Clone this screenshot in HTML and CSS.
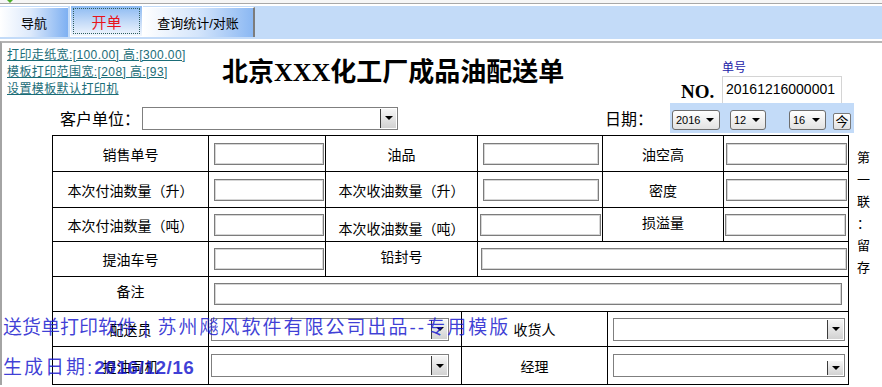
FILE: index.html
```html
<!doctype html>
<html>
    <head>
        <meta charset="utf-8">
        <link rel="stylesheet" href="styles.css">
    </head>
    <body>
        <div class="strip"><span class="grip"></span></div>
        <div class="tabbar">
            <div class="tab tab-first">导航</div>
            <div class="tab tab-on"><span>开单</span></div>
            <div class="tab tab-last">查询统计/对账</div>
        </div>
        <div class="content">
            <div class="head">
                <div class="links">
                    <a href="#">打印走纸宽:[100.00] 高:[300.00]</a>
                    <a href="#">模板打印范围宽:[208] 高:[93]</a>
                    <a href="#">设置模板默认打印机</a>
                </div>
                <h1 class="title">北京XXX化工厂成品油配送单</h1>
                <div class="no">
                    <div class="no-label">单号</div>
                    <div class="no-row">
                        <b>NO.</b>
                        <span class="no-box">20161216000001</span>
                    </div>
                </div>
            </div>

            <div class="subhead">
                <span class="cust">客户单位：</span>
                <div class="combo cb-cust"><i></i></div>
                <span class="date-label">日期：</span>
                <div class="datebar">
                    <span class="pick p-year">2016</span>
                    <span class="pick p-month">12</span>
                    <span class="pick p-day">16</span>
                    <span class="today">今</span>
                </div>
            </div>

            <div class="sheet">
                <div class="grid">
                    <!-- row 1 -->
                    <div class="row r1">
                        <div class="c lab">销售单号</div>
                        <div class="c in1"><span class="field f-a"></span></div>
                        <div class="c lab2">油品</div>
                        <div class="c in2"><span class="field f-b"></span></div>
                        <div class="c lab3">油空高</div>
                        <div class="c in3"><span class="field f-c"></span></div>
                    </div>
                    <!-- row 2 -->
                    <div class="row r2">
                        <div class="c lab">本次付油数量（升）</div>
                        <div class="c in1"><span class="field f-a"></span></div>
                        <div class="c lab2">本次收油数量（升）</div>
                        <div class="c in2"><span class="field f-b"></span></div>
                        <div class="c lab3">密度</div>
                        <div class="c in3"><span class="field f-c"></span></div>
                    </div>
                    <!-- row 3 -->
                    <div class="row r3">
                        <div class="c lab">本次付油数量（吨）</div>
                        <div class="c in1"><span class="field f-a"></span></div>
                        <div class="c lab2 low">本次收油数量（吨）</div>
                        <div class="c in2"><span class="field f-b"></span></div>
                        <div class="c lab3 high">损溢量</div>
                        <div class="c in3"><span class="field f-c"></span></div>
                    </div>
                    <!-- row 4 -->
                    <div class="row r4">
                        <div class="c lab">提油车号</div>
                        <div class="c in1"><span class="field f-a"></span></div>
                        <div class="c lab2 high">铅封号</div>
                        <div class="c wide4"><span class="field f-long"></span></div>
                    </div>
                    <!-- row 5 -->
                    <div class="row r5">
                        <div class="c lab high">备注</div>
                        <div class="c wide5"><span class="field f-note"></span></div>
                    </div>
                    <!-- row 6 -->
                    <div class="row r6">
                        <div class="c lab">配送员</div>
                        <div class="c sel1"><div class="combo cb-a"><i></i></div></div>
                        <div class="c lab4">收货人</div>
                        <div class="c sel2"><div class="combo cb-b"><i></i></div></div>
                    </div>
                    <!-- row 7 -->
                    <div class="row r7">
                        <div class="c lab">提油司机</div>
                        <div class="c sel1"><div class="combo cb-a"><i></i></div></div>
                        <div class="c lab4">经理</div>
                        <div class="c sel2"><div class="combo cb-b low"><i></i></div></div>
                    </div>
                </div>
                <div class="side">
                    <span>第</span><span>一</span><span>联</span><span>：</span><span>留</span><span>存</span>
                </div>
            </div>

            <div class="mark">
                <div><span class="m-a">送货单打印软件</span> | 苏州飚风软件有限公司出品--专用模版</div>
                <div>生成日期:<b>2016/12/16</b></div>
            </div>
        </div>
    </body>
</html>
```

FILE: styles.css
```css
* {
    margin: 0;
    padding: 0;
    box-sizing: border-box;
}
body {
    width: 882px;
    height: 387px;
    overflow: hidden;
    background: #fff;
    font-family: "Liberation Sans", "Noto Sans CJK SC", sans-serif;
    color: #000;
}

/* top strip and tabs */
.strip {
    height: 4px;
    border-bottom: 1px solid #a8a8a8;
    background: #f6f6f6;
    padding-left: 7px;
}
.grip {
    display: block;
    width: 0;
    height: 0;
    border-left: 3px solid transparent;
    border-right: 3px solid transparent;
    border-top: 3px solid #4caf2a;
}
.tabbar {
    margin-top: 2px;
    height: 33px;
    background: #c3dbf8;
    display: flex;
    align-items: flex-end;
    padding-bottom: 2px;
}
.tab {
    height: 30px;
    display: flex;
    align-items: center;
    justify-content: center;
    font-size: 13px;
    border-top: 1px solid #fff;
}
.tab-first {
    width: 68px;
    background: linear-gradient(to right, #fff 0%, #dce9fb 45%, #7eb0f2 100%);
}
.tab-on {
    width: 73px;
    height: 32px;
    margin-left: 2px;
    padding: 2px;
    border: 1px solid #fff;
    background: linear-gradient(to bottom, #8cbaf2 0%, #c6dcf8 55%, #f2f7fe 100%);
}
.tab-on span {
    flex: 1;
    align-self: stretch;
    display: flex;
    align-items: center;
    justify-content: center;
    border: 1px dotted #2f5f5f;
    color: #e8141c;
    font-size: 15px;
}
.tab-last {
    width: 112px;
    border-right: 2px solid #7c7c7c;
    background: linear-gradient(to right, #fff 0%, #d4e5fb 50%, #8bb8f3 100%);
}

/* page body */
.content {
    position: relative;
    margin-top: 2px;
    height: 344px;
    border-top: 2px solid #b4b4b4;
    border-left: 2px solid #a4a4a4;
}
.head {
    display: flex;
    height: 60px;
}
.links {
    width: 215px;
    padding: 4px 0 0 5px;
    display: flex;
    flex-direction: column;
}
.links a {
    font-size: 12px;
    line-height: 17px;
    letter-spacing: 0.4px;
    color: #1b6d78;
    white-space: nowrap;
}
.title {
    align-self: center;
    margin-left: 5px;
    font-family: "Liberation Serif", "Noto Sans CJK SC", serif;
    font-size: 26px;
    font-weight: bold;
    line-height: 30px;
    white-space: nowrap;
}
.no {
    margin-left: auto;
    margin-right: 40px;
    align-self: flex-end;
    display: flex;
    flex-direction: column;
}
.no-label {
    padding-left: 41px;
    font-size: 12px;
    line-height: 16px;
    color: #1a1aa8;
}
.no-row {
    display: flex;
    align-items: flex-end;
}
.no-row b {
    width: 41px;
    font-family: "Liberation Serif", serif;
    font-size: 19px;
    line-height: 22px;
}
.no-box {
    width: 120px;
    height: 27px;
    padding: 4px 0 0 3px;
    border: 1px solid #d4d4d4;
    border-bottom: none;
    font-size: 14px;
    line-height: 16px;
}

.subhead {
    display: flex;
    align-items: center;
    height: 30px;
    padding-left: 58px;
}
.cust, .date-label {
    font-size: 16px;
}
.cust {
    width: 82px;
}
.cb-cust {
    width: 256px;
}
.date-label {
    margin-left: 207px;
    width: 65px;
}
.datebar {
    align-self: stretch;
    width: 184px;
    background: #c3dbf8;
    display: flex;
    align-items: flex-end;
    padding: 0 0 3px 2px;
}
.pick {
    height: 20px;
    display: flex;
    align-items: center;
    justify-content: space-between;
    padding: 0 5px 0 3px;
    border: 1px solid #6e6e6e;
    border-radius: 3px;
    background: linear-gradient(#fff, #e2e2e2);
    font-size: 11px;
}
.pick::after {
    content: "";
    border-left: 4px solid transparent;
    border-right: 4px solid transparent;
    border-top: 4px solid #000;
}
.p-year { width: 48px; }
.p-month { width: 36px; margin-left: 10px; }
.p-day { width: 37px; margin-left: 23px; }
.today {
    width: 18px;
    height: 17px;
    margin-left: 7px;
    border: 1px solid #7a7a7a;
    border-radius: 2px;
    background: linear-gradient(#fff, #e0e0e0);
    font-size: 13px;
    line-height: 15px;
    text-align: center;
}

/* combo boxes */
.combo {
    height: 23px;
    border: 1px solid #7f7f7f;
    background: #fff;
    display: flex;
    justify-content: flex-end;
    padding: 1px;
}
.combo i {
    width: 16px;
    border-left: 1px solid #3c3c3c;
    background: linear-gradient(#f6f6f6, #d2d2d2);
    display: flex;
    align-items: center;
    justify-content: center;
}
.combo i::after {
    content: "";
    border-left: 4px solid transparent;
    border-right: 4px solid transparent;
    border-top: 4px solid #000;
}

/* the sheet */
.sheet {
    display: flex;
    margin-top: 2px;
}
.grid {
    margin-left: 50px;
    border-left: 1px solid #000;
    border-top: 1px solid #000;
}
.row {
    display: flex;
    border-bottom: 1px solid #000;
}
.r1, .r2 { height: 36px; }
.r3 { height: 34px; }
.r4, .r5, .r6 { height: 35px; }
.r7 { height: 38px; }
.c {
    border-right: 1px solid #000;
    display: flex;
    align-items: center;
    font-size: 14px;
    white-space: nowrap;
}
.lab, .lab2, .lab3, .lab4 {
    justify-content: center;
}
.low { padding-top: 6px; }
.high { padding-bottom: 6px; }
.lab { width: 156px; }
.in1 { width: 117px; }
.lab2 { width: 152px; }
.in2 { width: 125px; }
.lab3 { width: 121px; }
.in3 { width: 125px; }
.wide4 { width: 371px; }
.wide5 { width: 640px; }
.sel1 { width: 253px; }
.lab4 { width: 146px; }
.sel2 { width: 241px; }

.field {
    display: block;
    height: 22px;
    border: 1px solid #7c7c7c;
    box-shadow: inset 0 0 0 1px #d6d6d6;
    background: #fff;
}
.f-a { width: 110px; margin-left: 5px; }
.f-b { width: 116px; margin-left: 5px; }
.f-c { width: 121px; margin-left: 2px; }
.r3 .f-b { width: 121px; margin-left: 2px; }
.r3 .f-c { margin-left: 1px; }
.f-long { width: 366px; margin-left: 3px; }
.f-note { width: 628px; margin-left: 5px; }
.cb-a { width: 238px; margin-left: 2px; }
.cb-b { width: 232px; margin-left: 5px; }

.side {
    margin-left: 8px;
    padding-top: 12px;
    display: flex;
    flex-direction: column;
    font-size: 13px;
    line-height: 22px;
}

/* watermark over the sheet */
.mark {
    position: absolute;
    left: 1px;
    top: 265px;
    font-size: 19px;
    line-height: 40px;
    letter-spacing: 2px;
    color: rgba(20, 20, 205, 0.82);
    white-space: nowrap;
}
.m-a {
    letter-spacing: 0;
}
.mark b {
    letter-spacing: 0.5px;
}
```
